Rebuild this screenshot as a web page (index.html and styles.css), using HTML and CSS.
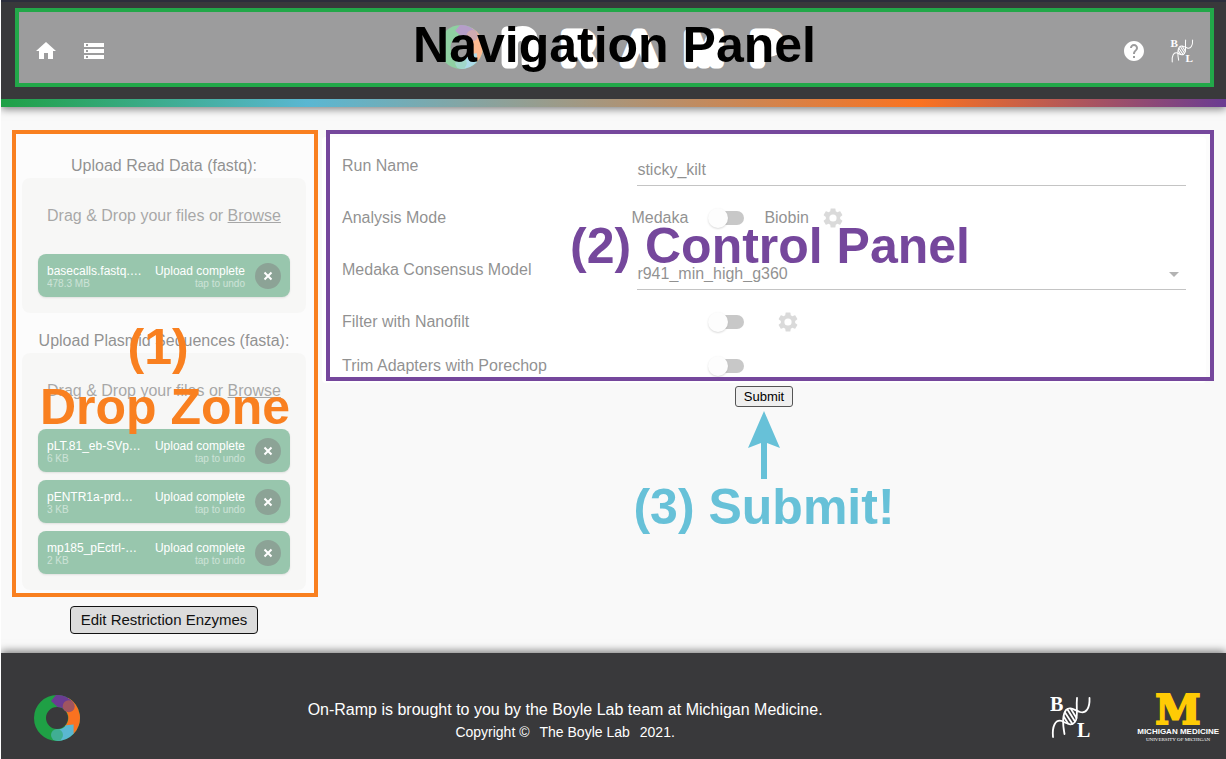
FILE: index.html
```
<!DOCTYPE html>
<html lang="en">
<head>
<meta charset="utf-8">
<title>On-Ramp</title>
<link rel="stylesheet" href="styles.css">
</head>
<body>
<svg class="defs" width="0" height="0" aria-hidden="true">
  <symbol id="ring" viewBox="0 0 46 46">
    <circle cx="23" cy="23" r="17" fill="none" stroke="#1fa045" stroke-width="12"/>
    <path d="M34 2.8A23 23 0 0 1 39.5 39L31 31A11.300 11.300 0 0 0 31 15Z" fill="#fa7220"/>
    <path d="M22 0C28-.3 33.500 1.500 39 7L31 15C29 13 26.500 12 23.500 12L17 6Z" fill="#6a3c92"/>
    <path d="M23 34.500A11.500 11.500 0 0 0 32 30.200L39.600 29.500V38.800A23 23 0 0 1 23 46Z" fill="#5ab7d2"/>
    <circle cx="34.700" cy="11.300" r="6" fill="#a05560"/>
    <circle cx="23" cy="40" r="6" fill="#40ae93"/>
  </symbol>
  <symbol id="boyle" viewBox="0 0 41 43">
    <g fill="none" stroke="#fff" stroke-width="1.800" stroke-linecap="round">
      <path d="M27 2C26 12 28 18 26 24C23 31 18 28 12 25C5 23 2 31 3 41"/>
      <path d="M39.500 2C40 12 36 18 30 16C24 14 20 10 16 14C12 19 13 30 14.500 38"/>
      <path d="M17.500 13.500L25 25.500M15 16.500L22.500 28M21 13L26.500 22M14 21L18 27.500"/>
    </g>
    <text x="0" y="15" class="boyle-letter">B</text>
    <text x="27" y="41" class="boyle-letter">L</text>
  </symbol>
  <symbol id="gear" viewBox="0 0 24 24">
    <path d="M19.140 12.940c.04-.3.06-.61.06-.94 0-.32-.02-.64-.07-.94l2.030-1.580c.18-.14.23-.41.12-.61l-1.920-3.320c-.12-.22-.37-.29-.59-.22l-2.390.96c-.5-.38-1.030-.7-1.620-.94L14.400 2.810c-.04-.24-.24-.41-.48-.41h-3.840c-.24 0-.43.17-.47.41L9.250 5.350c-.59.24-1.130.57-1.620.94L5.240 5.330c-.22-.08-.47 0-.59.22L2.740 8.870c-.12.21-.08.47.12.61l2.030 1.580c-.05.3-.09.63-.09.94s.02.64.07.94l-2.030 1.580c-.18.14-.23.41-.12.61l1.920 3.320c.12.22.37.29.59.22l2.390-.96c.5.38 1.030.7 1.620.94l.36 2.540c.05.24.24.41.48.41h3.840c.24 0 .44-.17.47-.41l.36-2.540c.59-.24 1.130-.56 1.620-.94l2.390.96c.22.08.47 0 .59-.22l1.920-3.320c.12-.22.07-.47-.12-.61zM12 15.600A3.600 3.600 0 1 1 12 8.400a3.600 3.600 0 0 1 0 7.200z"/>
  </symbol>
</svg>

<div class="page">
  <header class="header">
    <nav class="nav">
      <div class="nav-side">
        <a href="#" class="nav-link" aria-label="Home"><svg viewBox="0 0 24 24"><path d="M10 20v-6h4v6h5v-8h3L12 3 2 12h3v8z"/></svg></a>
        <a href="#" class="nav-link" aria-label="Results"><svg viewBox="0 0 24 24"><path d="M2 20h20v-4H2v4zm2-3h2v2H4v-2zM2 4v4h20V4H2zm4 3H4V5h2v2zm-4 7h20v-4H2v4zm2-3h2v2H4v-2z"/></svg></a>
      </div>
      <svg class="wordmark" viewBox="0 0 350 44" aria-label="OnRamp">
        <use href="#ring" x="0" y="0" width="44" height="44"/>
        <g class="wordmark-text">
          <text x="64" y="38" class="wordmark-n">n</text>
          <text x="124" y="38">R</text>
          <text x="186" y="38">Λ</text>
          <text x="247" y="38">M</text>
          <text x="313" y="38">P</text>
        </g>
      </svg>
      <div class="nav-side nav-end">
        <a href="#" class="nav-link" aria-label="Help"><svg viewBox="0 0 24 24"><path d="M12 2C6.480 2 2 6.480 2 12s4.480 10 10 10 10-4.480 10-10S17.520 2 12 2zm1 17h-2v-2h2v2zm2.070-7.750-.9.920C13.450 12.900 13 13.500 13 15h-2v-.5c0-1.100.45-2.100 1.170-2.830l1.240-1.260c.37-.36.59-.86.59-1.410 0-1.100-.9-2-2-2s-2 .9-2 2H8c0-2.210 1.790-4 4-4s4 1.790 4 4c0 .88-.36 1.680-.93 2.250z"/></svg></a>
        <a href="#" class="nav-link" aria-label="Boyle Lab"><svg><use href="#boyle"/></svg></a>
      </div>
    </nav>
    <div class="callout callout-nav">Navigation Panel</div>
  </header>

  <main class="main">
    <aside class="sidebar">
      <div class="uploads">
        <h2 class="upload-title">Upload Read Data (fastq):</h2>
        <section class="dropzone">
          <p class="drop-label">Drag &amp; Drop your files or <a href="#">Browse</a></p>
          <ul class="files">
            <li class="file"><div class="file-info"><span>basecalls.fastq.…</span><small>478.3 MB</small></div><div class="file-status"><span>Upload complete</span><small>tap to undo</small></div><button class="undo" aria-label="Undo"><svg viewBox="0 0 26 26"><path d="M9.500 9.500l7 7m0-7l-7 7"/></svg></button></li>
          </ul>
        </section>
        <h2 class="upload-title second">Upload Plasmid Sequences (fasta):</h2>
        <section class="dropzone">
          <p class="drop-label">Drag &amp; Drop your files or <a href="#">Browse</a></p>
          <ul class="files">
            <li class="file"><div class="file-info"><span>pLT.81_eb-SVp…</span><small>6 KB</small></div><div class="file-status"><span>Upload complete</span><small>tap to undo</small></div><button class="undo" aria-label="Undo"><svg viewBox="0 0 26 26"><path d="M9.500 9.500l7 7m0-7l-7 7"/></svg></button></li>
            <li class="file"><div class="file-info"><span>pENTR1a-prd…</span><small>3 KB</small></div><div class="file-status"><span>Upload complete</span><small>tap to undo</small></div><button class="undo" aria-label="Undo"><svg viewBox="0 0 26 26"><path d="M9.500 9.500l7 7m0-7l-7 7"/></svg></button></li>
            <li class="file"><div class="file-info"><span>mp185_pEctrl-…</span><small>2 KB</small></div><div class="file-status"><span>Upload complete</span><small>tap to undo</small></div><button class="undo" aria-label="Undo"><svg viewBox="0 0 26 26"><path d="M9.500 9.500l7 7m0-7l-7 7"/></svg></button></li>
          </ul>
        </section>
        <div class="callout callout-drop">(1) 
Drop Zone</div>
      </div>
      <button class="edit">Edit Restriction Enzymes</button>
    </aside>

    <form class="form">
      <div class="card">
        <div class="row">
          <label for="run">Run Name</label>
          <input class="field" id="run" type="text" value="sticky_kilt">
        </div>
        <div class="row">
          <label for="mode">Analysis Mode</label>
          <div class="switch-line">
            <span class="switch-before">Medaka</span>
            <input class="switch" id="mode" type="checkbox">
            <div class="switch-after"><span>Biobin</span><button type="button" class="gear" aria-label="Mode settings"><svg><use href="#gear"/></svg></button></div>
          </div>
        </div>
        <div class="row">
          <label for="model">Medaka Consensus Model</label>
          <div class="select-box"><select class="field" id="model"><option>r941_min_high_g360</option></select></div>
        </div>
        <div class="row">
          <label for="filter">Filter with Nanofilt</label>
          <div class="switch-line">
            <span class="switch-before"></span>
            <input class="switch" id="filter" type="checkbox">
            <div class="switch-after"><button type="button" class="gear" aria-label="Filter settings"><svg><use href="#gear"/></svg></button></div>
          </div>
        </div>
        <div class="row last">
          <label for="trim">Trim Adapters with Porechop</label>
          <div class="switch-line">
            <span class="switch-before"></span>
            <input class="switch" id="trim" type="checkbox">
          </div>
        </div>
        <div class="callout callout-control">(2) Control Panel</div>
      </div>
      <button class="submit" type="button">Submit</button>
      <svg class="arrow" viewBox="0 0 32 68"><path d="M16 0L32 37L19 32V68H13V32L0 37Z"/></svg>
      <p class="submit-note">(3) Submit!</p>
    </form>
  </main>

  <footer class="footer">
    <svg class="footer-ring"><use href="#ring"/></svg>
    <div class="credits">
      <p>On-Ramp is brought to you by the Boyle Lab team at Michigan Medicine.</p>
      <p class="copyright"><span>Copyright ©</span><span>The Boyle Lab</span><span>2021.</span></p>
    </div>
    <svg class="footer-boyle"><use href="#boyle"/></svg>
    <div class="medicine">
      <svg class="block-m" viewBox="0 0 48 34"><text x="24" y="32" class="block-letter">M</text></svg>
      <strong>MICHIGAN MEDICINE</strong>
      <small>UNIVERSITY OF MICHIGAN</small>
    </div>
  </footer>
</div>
</body>
</html>
```

FILE: styles.css
```
* { box-sizing: border-box; }
html { background: #fff; }
body {
  margin: 0 0 0 1px;
  font: 16px/24px "Liberation Sans", Arial, sans-serif;
  color: #222;
}
p, h2, ul { margin: 0; padding: 0; }
a { color: inherit; }
.defs { position: absolute; }
.page {
  min-height: 100vh;
  display: flex;
  flex-direction: column;
  background: #f9f9f9;
}

/* annotation boxes laid over the interface */
.callout {
  position: absolute;
  border: 4px solid;
  background: rgba(255, 255, 255, .5);
  font-size: 50px;
  line-height: 60px;
  font-weight: bold;
  text-align: center;
  white-space: pre;
  pointer-events: none;
}

.header {
  position: relative;
  background: #39393b;
  border-top: 2px solid #2c2e3c;
  box-shadow: 0 2px 8px rgba(0, 0, 0, .5);
}
.header::after {
  content: "";
  display: block;
  height: 8px;
  background: linear-gradient(90deg, #1fa045, #5ab7d2 25%, #fa7220 75%, #6a3c92);
}
.nav {
  display: grid;
  grid-template-columns: 1fr auto 1fr;
  align-items: center;
  padding: 23px 32px 22px 33px;
}
.nav-side { display: flex; gap: 24px; }
.nav-end { justify-content: flex-end; }
.nav-link { display: block; width: 24px; height: 24px; }
.nav-link svg { display: block; width: 24px; height: 24px; fill: #fff; }
.wordmark { width: 350px; height: 44px; margin-bottom: 8px; }
.wordmark-text {
  font: 43px "Liberation Sans", Arial, sans-serif;
  fill: #fff;
  stroke: #fff;
  stroke-width: 11px;
  stroke-linejoin: round;
}
.wordmark-n { font-size: 60px; }
.callout-nav {
  inset: 6px 12px 20px 14px;
  padding-top: 3px;
  border-color: #22a849;
  color: #000;
}
.boyle-letter { font: bold 20px "Liberation Serif", "Times New Roman", serif; fill: #fff; }

.main {
  flex: 1;
  display: grid;
  grid-template-columns: 284px minmax(0, 1fr);
  gap: 16px;
  align-items: start;
  padding: 30px 20px 19px 21px;
}
.sidebar { display: flex; flex-direction: column; align-items: center; gap: 16px; }
.uploads { position: relative; width: 100%; padding-top: 16px; }
.upload-title { font-size: 16px; font-weight: normal; line-height: 25px; text-align: center; }
.upload-title.second { padding-top: 15px; }
.dropzone { padding: 0 16px 16px; border-radius: 8px; background: #efefed; }
.drop-label { line-height: 76px; text-align: center; color: #4f4f4f; }
.files { list-style: none; display: grid; gap: 8px; }
.file {
  display: flex;
  align-items: center;
  height: 43px;
  padding: 0 9px;
  border-radius: 8px;
  background: #318d5b;
  box-shadow: 0 1px 2px rgba(0, 0, 0, .2);
  color: #fff;
  font-size: 12px;
  line-height: 16px;
  white-space: nowrap;
}
.file-info { flex: 1; min-width: 0; }
.file-status { text-align: right; }
.file span, .file small { display: block; }
.file span { padding-top: 1px; }
.file small { font-size: 10px; line-height: 10px; opacity: .5; }
.undo {
  width: 26px;
  height: 26px;
  margin-left: 10px;
  padding: 0;
  border: 0;
  border-radius: 50%;
  background: rgba(0, 0, 0, .5);
}
.undo svg { display: block; stroke: #fff; stroke-width: 2px; }
.callout-drop {
  inset: -7px -12px -7px -10px;
  padding-top: 183px;
  border-color: #f98020;
  color: #f98020;
}
.edit {
  height: 28px;
  padding: 0 10px 1px;
  border: 1px solid #111;
  border-radius: 4px;
  background: #dcdcdc;
  color: #111;
  font: 15px "Liberation Sans", Arial, sans-serif;
}

.form { display: flex; flex-direction: column; align-items: center; }
.card {
  position: relative;
  width: 100%;
  padding: 3px 20px 0;
  border-radius: 4px;
  background: #fff;
}
.row {
  display: grid;
  grid-template-columns: 35% minmax(0, 1fr);
  align-items: center;
  height: 52px;
}
.row.last { height: 35px; }
.field {
  display: block;
  width: 100%;
  height: 32px;
  margin: 8px 0 0;
  padding: 0;
  border: 0;
  border-bottom: 1px solid #888;
  border-radius: 0;
  outline: 0;
  background: transparent;
  appearance: none;
  color: #222;
  font: 16px "Liberation Sans", Arial, sans-serif;
}
.select-box { position: relative; }
.select-box::after {
  content: "";
  position: absolute;
  right: 7px;
  bottom: 13px;
  border: 5px solid transparent;
  border-top-color: #666;
  border-bottom: 0;
}
.switch-line { display: flex; align-items: center; gap: 20px; }
.switch-before { display: flex; justify-content: flex-end; width: 51px; }
.switch {
  position: relative;
  width: 36px;
  height: 20px;
  margin: 0;
  appearance: none;
}
.switch::before, .switch::after { content: ""; position: absolute; }
.switch::before { inset: 3px 0 3px 4px; border-radius: 7px; background: #919191; }
.switch::after {
  left: 0;
  top: 0;
  width: 20px;
  height: 20px;
  border-radius: 50%;
  background: #fafafa;
  box-shadow: 0 1px 2px rgba(0, 0, 0, .3);
}
.switch-after { display: flex; align-items: center; }
.gear { width: 48px; height: 24px; padding: 0 12px; border: 0; background: none; }
.gear svg { display: block; width: 24px; height: 24px; fill: #b5b5b5; }
.callout-control {
  inset: -7px -8px 2px 4px;
  padding-top: 82px;
  border-color: #75479c;
  color: #75479c;
}
.submit {
  height: 21px;
  margin-top: 3px;
  padding: 0 8px;
  border: 1px solid #555;
  border-radius: 3px;
  background: #efefef;
  color: #000;
  font: 13px "Liberation Sans", Arial, sans-serif;
}
.arrow { width: 32px; height: 68px; margin-top: 4px; fill: #67c1d8; }
.submit-note { font-size: 50px; line-height: 56px; font-weight: bold; color: #67c1d8; }

.footer {
  display: flex;
  align-items: center;
  padding: 38px 7px 17px 33px;
  background: #39393b;
  box-shadow: 0 -2px 8px rgba(0, 0, 0, .5);
  color: #fff;
}
.footer-ring { width: 46px; height: 46px; }
.credits { flex: 1; padding-top: 7px; text-align: center; line-height: 23px; }
.copyright { display: flex; justify-content: center; gap: 10px; font-size: 14px; }
.footer-boyle { width: 41px; height: 43px; margin-right: 46px; }
.medicine { display: flex; flex-direction: column; align-items: center; }
.block-m { width: 48px; height: 34px; }
.block-letter {
  font: bold 41px "DejaVu Serif", serif;
  text-anchor: middle;
  fill: #ffcb05;
  stroke: #ffcb05;
  stroke-width: 2px;
}
.medicine strong { font-size: 8px; line-height: 11px; }
.medicine small { font: 5px/6px "Liberation Serif", "Times New Roman", serif; }
```
